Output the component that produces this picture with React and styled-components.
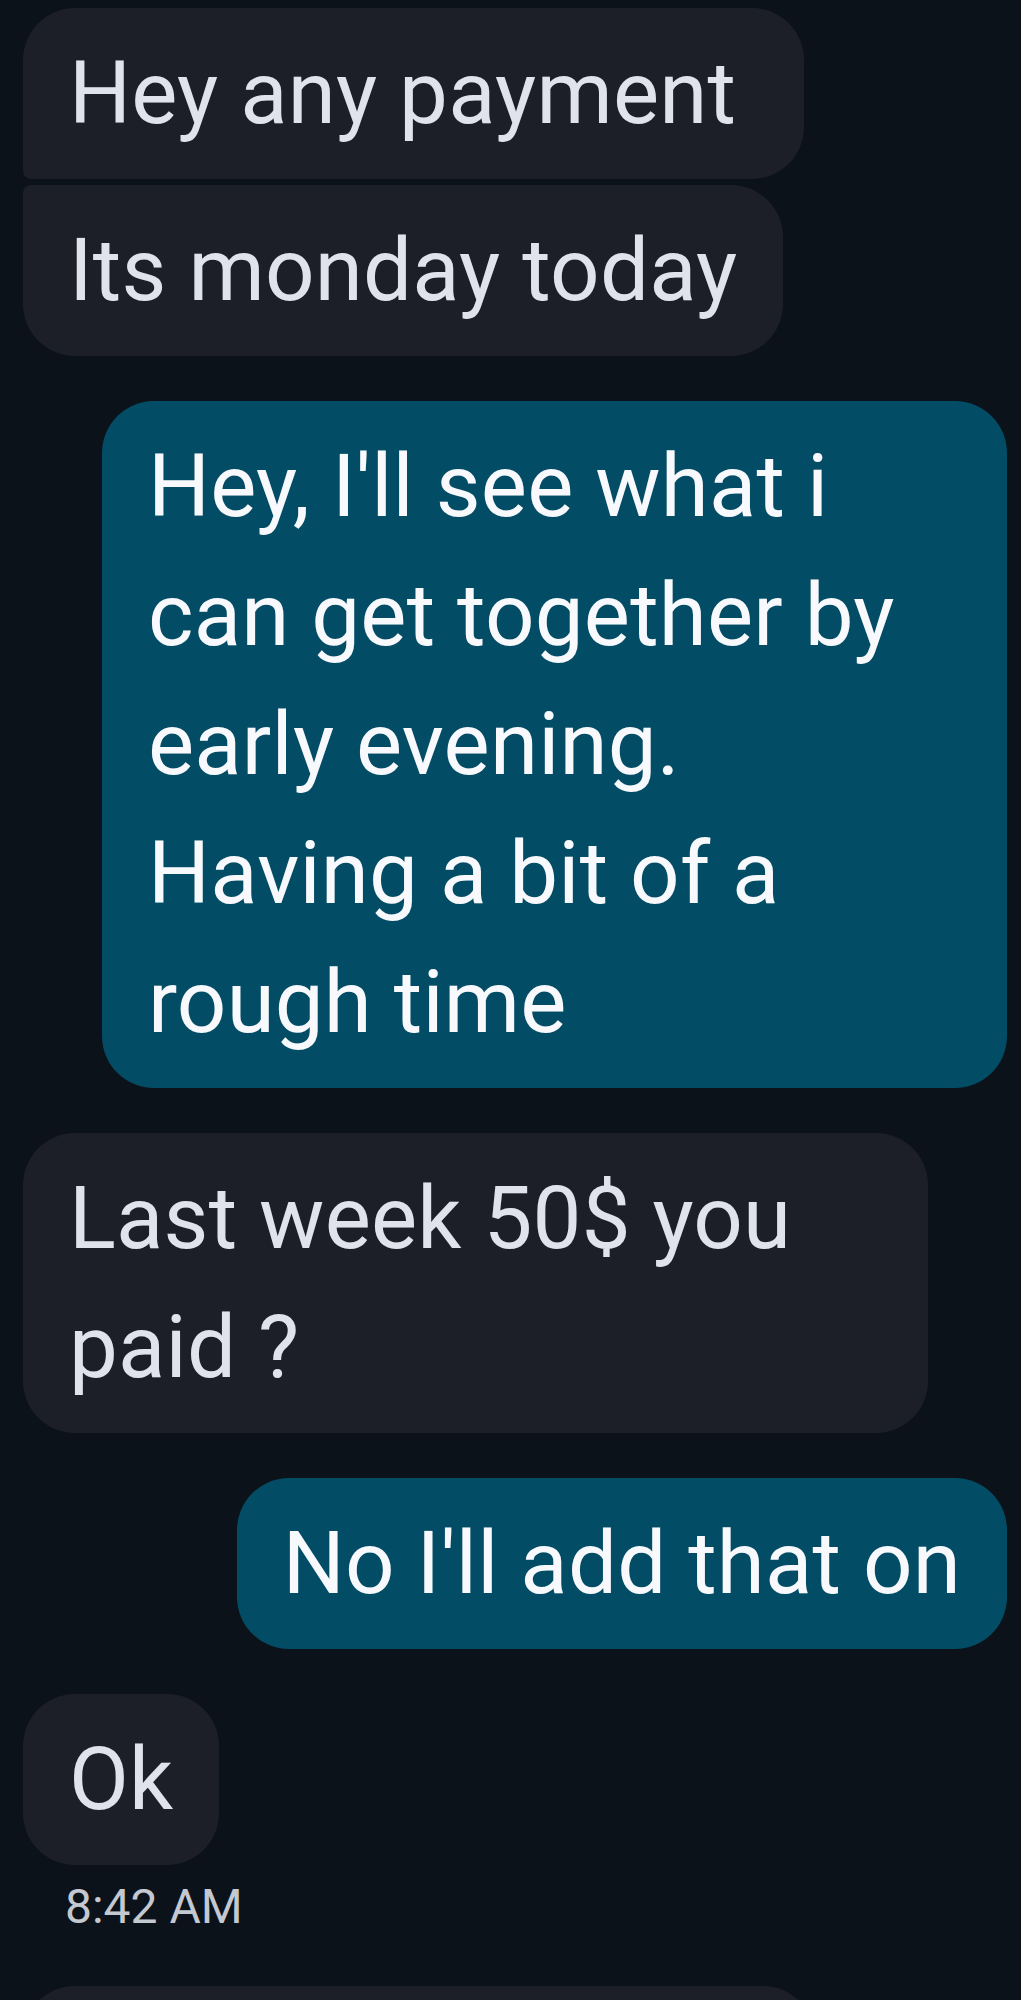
import styled, { createGlobalStyle } from "styled-components";

const GlobalStyle = createGlobalStyle`
  html, body {
    margin: 0;
    padding: 0;
    background-color: #0c1219;
  }
  body {
    font-family: Roboto, "Noto Sans", Arial, sans-serif;
  }
`

const Thread = styled.div`
  width: 1021px;
  height: 2000px;
  box-sizing: border-box;
  padding: 8px 14px 0 23px;
  display: flex;
  flex-direction: column;
  gap: 45px;
  background-color: #0c1219;
  overflow: hidden;
`

const Group = styled.div`
  display: flex;
  flex-direction: column;
  align-items: ${(p) => (p.$out ? "flex-end" : "flex-start")};
  gap: 6px;
`

const Bubble = styled.div`
  box-sizing: border-box;
  flex-shrink: 0;
  max-width: 905px;
  min-height: 171px;
  padding: 21px 46px;
  font-size: 87px;
  line-height: 129px;
  letter-spacing: 0.2px;
  white-space: pre-wrap;
  border-radius: ${(p) => p.$radius || "52px"};
  background-color: ${(p) => (p.$out ? "#034c66" : "#1c1f27")};
  color: ${(p) => (p.$out ? "#f7f9fc" : "#e0e3ec")};
  width: ${(p) => p.$width || "auto"};
`

const Stamp = styled.div`
  margin-top: 13px;
  padding-left: 42px;
  padding-bottom: 6px;
  font-size: 48px;
  line-height: 57px;
  color: #c4c8d1;
`

const Footer = styled.div`
  display: flex;
  flex-direction: column;
`

const first = "52px 52px 52px 8px"
const last = "8px 52px 52px 52px"

function App() {
  return (
    <>
      <GlobalStyle />
      <Thread>
        <Group>
          <Bubble $radius={first}>Hey any payment </Bubble>
          <Bubble $radius={last}>Its monday today</Bubble>
        </Group>
        <Group $out>
          <Bubble $out>
            Hey, I'll see what i can get together by early evening. Having a bit of a rough time
          </Bubble>
        </Group>
        <Group>
          <Bubble>Last week 50$ you paid ?</Bubble>
        </Group>
        <Group $out>
          <Bubble $out>No I'll add that on</Bubble>
        </Group>
        <Footer>
          <Group>
            <Bubble>Ok</Bubble>
          </Group>
          <Stamp>8:42 AM</Stamp>
        </Footer>
        <Group>
          <Bubble $width="792px" aria-hidden="true" />
        </Group>
      </Thread>
    </>
  )
}

export default App
